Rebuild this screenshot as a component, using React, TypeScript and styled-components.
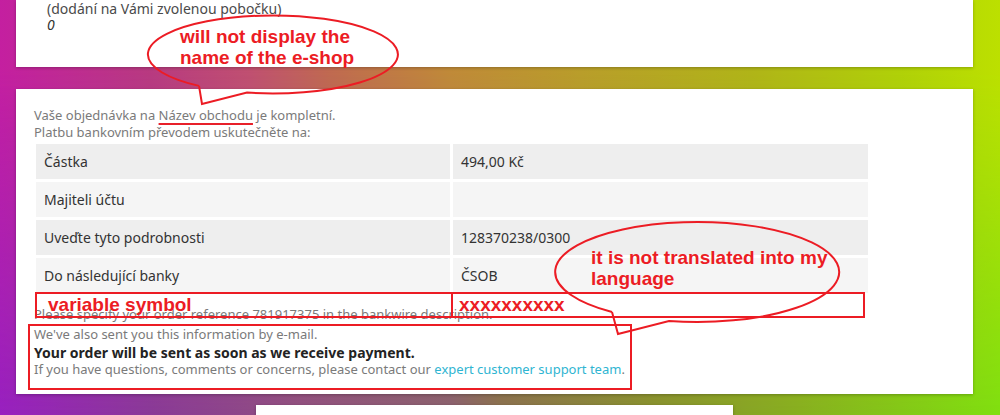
import React from "react";
import styled, { createGlobalStyle } from "styled-components";

const Global = createGlobalStyle`
  html, body { margin: 0; padding: 0; }
  body { font-family: "Noto Sans", "Liberation Sans", sans-serif; }
`;

const Page = styled.div`
  position: relative;
  width: 1000px;
  height: 415px;
  overflow: hidden;
  background: linear-gradient(90deg, #9820c0 0%, #8a3a98 15%, #905080 30%, #8a6070 45%, #8a7050 50%, #889030 65%, #88b020 80%, #80e010 100%);
  &::before {
    content: "";
    position: absolute;
    inset: 0;
    background: linear-gradient(90deg, #c41fa0 0%, #b83a80 15%, #c05070 25%, #c06a50 33%, #c08a38 45%, #b8a028 60%, #b0b418 75%, #b0d008 90%, #bce000 100%);
    -webkit-mask-image: linear-gradient(to bottom, #000 70px, transparent 415px);
    mask-image: linear-gradient(to bottom, #000 70px, transparent 415px);
  }
`;

const Flow = styled.div`
  position: relative;
  display: flex;
  flex-direction: column;
`;

const Card = styled.div<{ $left: number; $width: number; $height: number; $top?: number }>`
  margin-left: ${(p) => p.$left}px;
  margin-top: ${(p) => p.$top ?? 0}px;
  width: ${(p) => p.$width}px;
  height: ${(p) => p.$height}px;
  background: #fff;
  box-shadow: 0 1px 3px rgba(0, 0, 0, 0.25);
  box-sizing: border-box;
  position: relative;
`;

const TopInner = styled.div`
  padding: 1px 0 0 31px;
  font-size: 14px;
  line-height: 16px;
  color: #4a4a4a;
`;

const Italic = styled.div`
  font-style: italic;
  color: #333;
`;

const MainInner = styled.div`
  padding: 18px 18px 0 18px;
  font-size: 13px;
  line-height: 17px;
  color: #7a7a7a;
`;

const Underlined = styled.span`
  text-decoration: underline;
  text-decoration-color: #e8202a;
  text-decoration-thickness: 2px;
  text-underline-offset: 3px;
`;

const Table = styled.table`
  border-collapse: separate;
  border-spacing: 3px;
  width: 838px;
  margin-left: -1px;
  font-size: 14px;
  color: #333;
`;

const Row = styled.tr`
  &:nth-child(odd) td { background: #eeeeee; }
  &:nth-child(even) td { background: #f5f5f5; }
`;

const Cell = styled.td<{ $w: number }>`
  width: ${(p) => p.$w}px;
  height: 35px;
  padding: 0 8px;
  box-sizing: border-box;
`;

const Note = styled.div`
  margin-top: 10px;
`;

const RedBox = styled.div`
  margin-top: 1px;
  margin-left: -6px;
  width: 604px;
  height: 66px;
  box-sizing: border-box;
  border: 2px solid #ec1c24;
  padding: 0 0 0 4px;
  line-height: 17.5px;
`;

const Strong = styled.div`
  font-weight: 700;
  font-size: 14px;
  color: #232323;
`;

const Link = styled.span`
  color: #2fb5d2;
`;

const Overlay = styled.svg`
  position: absolute;
  left: 0;
  top: 0;
  width: 1000px;
  height: 415px;
  pointer-events: none;
`;

const AnnoText = styled.text`
  font-family: "Liberation Sans", Arial, sans-serif;
  font-weight: 700;
  font-size: 19px;
  fill: #ec1c24;
`;

const rows: [string, string][] = [
  ["Částka", "494,00 Kč"],
  ["Majiteli účtu", ""],
  ["Uveďte tyto podrobnosti", "128370238/0300"],
  ["Do následující banky", "ČSOB"],
];

export default function App() {
  return (
    <Page>
      <Global />
      <Flow>
        <Card $left={16} $width={957} $height={67}>
          <TopInner>
            <div>(dodání na Vámi zvolenou pobočku)</div>
            <Italic>0</Italic>
          </TopInner>
        </Card>
        <Card $left={16} $width={957} $height={305} $top={22}>
          <MainInner>
            <div>
              Vaše objednávka na <Underlined>Název obchodu</Underlined> je kompletní.
            </div>
            <div>Platbu bankovním převodem uskutečněte na:</div>
            <Table>
              <tbody>
                {rows.map(([a, b]) => (
                  <Row key={a}>
                    <Cell $w={414}>{a}</Cell>
                    <Cell $w={415}>{b}</Cell>
                  </Row>
                ))}
              </tbody>
            </Table>
            <Note>Please specify your order reference 781917375 in the bankwire description.</Note>
            <RedBox>
              <div>We've also sent you this information by e-mail.</div>
              <Strong>Your order will be sent as soon as we receive payment.</Strong>
              <div>
                If you have questions, comments or concerns, please contact our{" "}
                <Link>expert customer support team</Link>.
              </div>
            </RedBox>
          </MainInner>
        </Card>
        <Card $left={256} $width={477} $height={20} $top={11} />
      </Flow>
      <Overlay viewBox="0 0 1000 415">
        <g fill="none" stroke="#ec1c24" strokeWidth={2}>
          <path d="M 199 85.9 L 202 104 L 247 92.6 A 125 39 0 1 0 199 85.9" />
          <path d="M 612 312 L 618 334 L 669 321 A 142 50 0 1 0 612 312" />
          <rect x={36} y={293} width={828} height={24} />
          <line x1={452} y1={293} x2={452} y2={317} />
        </g>
        <AnnoText x={180} y={43}>will not display the</AnnoText>
        <AnnoText x={180} y={64}>name of the e-shop</AnnoText>
        <AnnoText x={591} y={264}>it is not translated into my</AnnoText>
        <AnnoText x={591} y={285}>language</AnnoText>
        <AnnoText x={48} y={311}>variable symbol</AnnoText>
        <AnnoText x={459} y={311}>xxxxxxxxxx</AnnoText>
      </Overlay>
    </Page>
  );
}
